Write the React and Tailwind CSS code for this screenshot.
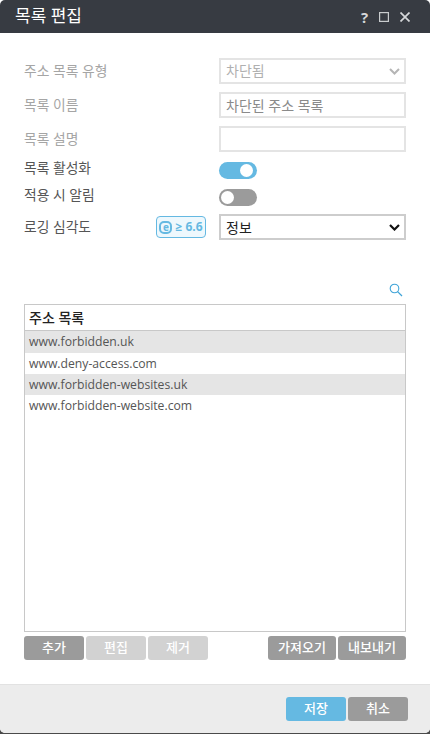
import React from "react";

const labelCls = "w-[195px] shrink-0 text-[13.8px]";
const toggleLabelCls = "w-[195px] shrink-0 pb-[4px] text-[13.8px]";

function Toggle({ on }) {
  return (
    <div className={`relative h-[17px] w-[38px] rounded-full ${on ? "bg-[#65b9e2]" : "bg-[#9b9b9b]"}`}>
      <div className={`absolute top-[2px] h-[13px] w-[13px] rounded-full bg-white ${on ? "left-[21px]" : "left-[2px]"}`} />
    </div>
  );
}

function Btn({ children, w, color = "bg-[#9b9b9b]" }) {
  return (
    <div className={`flex h-[24px] items-center justify-center rounded-[3px] text-[13px] font-medium text-white ${w} ${color}`}>
      {children}
    </div>
  );
}

const urls = [
  ["www.forbidden.uk", "h-[22px] bg-[#e5e5e5]"],
  ["www.deny-access.com", "h-[21px] bg-white"],
  ["www.forbidden-websites.uk", "h-[21px] bg-[#e5e5e5]"],
  ["www.forbidden-website.com", "h-[21px] bg-white"],
];

export default function App() {
  return (
    <div className="flex h-[734px] w-[430px] flex-col overflow-hidden bg-[#4a4a4a] font-['Open_Sans','Noto_Sans_CJK_KR',sans-serif] text-[#555555]">
      <div className="flex h-[733px] flex-col overflow-hidden rounded-b-[5px] bg-white">
        <header className="flex h-[33px] shrink-0 items-center justify-between rounded-t-[5px] bg-[#373b42] pl-[15px] pr-[20px]">
          <span className="pb-[2px] text-[17px] font-normal leading-none text-white">목록 편집</span>
          <div className="flex items-center pt-[1px]">
            <span className="w-[7px] text-center text-[15px] font-bold leading-none text-[#d5d7d9]">?</span>
            <svg width="10" height="10" viewBox="0 0 10 10" className="ml-[11px]"><rect x="0.6" y="0.6" width="8.8" height="8.8" fill="none" stroke="#c9ccce" strokeWidth="1.2" /></svg>
            <svg width="10" height="10" viewBox="0 0 10 10" className="ml-[11px]"><path d="M0.5 0.5 L9.5 9.5 M9.5 0.5 L0.5 9.5" stroke="#d5d7d9" strokeWidth="1.7" /></svg>
          </div>
        </header>

        <main className="flex flex-1 flex-col px-[24px] pt-[25px]">
          <div className="flex h-[26px] items-center">
            <label className={`${labelCls} text-[#a5a5a5]`}>주소 목록 유형</label>
            <div className="flex h-[26px] flex-1 items-center justify-between border-2 border-[#e4e4e4] pl-[5px] pr-[4px] text-[14px] text-[#b0b0b0]">
              <span className="pb-[2px]">차단됨</span>
              <svg width="11" height="7" viewBox="0 0 11 7"><path d="M1 1 L5.5 5.5 L10 1" fill="none" stroke="#b5b5b5" strokeWidth="2" /></svg>
            </div>
          </div>
          <div className="mt-[8px] flex h-[26px] items-center">
            <label className={`${labelCls} text-[#a5a5a5]`}>목록 이름</label>
            <div className="flex h-[26px] flex-1 items-center border-2 border-[#e4e4e4] pl-[5px] text-[14px] text-[#8a8a8a]">차단된 주소 목록</div>
          </div>
          <div className="mt-[8px] flex h-[26px] items-center">
            <label className={`${labelCls} text-[#a5a5a5]`}>목록 설명</label>
            <div className="h-[26px] flex-1 border-2 border-[#e4e4e4]" />
          </div>
          <div className="mt-[10px] flex h-[17px] items-center">
            <label className={toggleLabelCls}>목록 활성화</label>
            <Toggle on />
          </div>
          <div className="mt-[10px] flex h-[17px] items-center">
            <label className={toggleLabelCls}>적용 시 알림</label>
            <Toggle />
          </div>
          <div className="mt-[8px] flex h-[26px] items-center">
            <label className="w-[132px] shrink-0 text-[13.8px]">로깅 심각도</label>
            <div className="mr-[13px] flex h-[22px] w-[50px] items-center justify-center gap-[3px] rounded-[4px] border border-[#65b9e2] bg-[#eef8fd] text-[12px] font-bold text-[#65b9e2]">
              <span className="flex h-[13px] w-[13px] shrink-0 items-center justify-center rounded-[5px] border-2 border-[#65b9e2] pb-[1px] text-[10px] leading-none">e</span>
              <span className="whitespace-nowrap">≥ 6.6</span>
            </div>
            <div className="flex h-[26px] flex-1 items-center justify-between border-2 border-[#cdcdcd] pl-[5px] pr-[4px] text-[14px] text-[#222]">
              <span>정보</span>
              <svg width="11" height="7" viewBox="0 0 11 7"><path d="M1 1 L5.5 5.5 L10 1" fill="none" stroke="#111" strokeWidth="2.2" /></svg>
            </div>
          </div>

          <div className="mt-[43px] flex h-[21px] items-start justify-end pr-[3px]">
            <svg width="14" height="14" viewBox="0 0 14 14"><circle cx="5.5" cy="5.5" r="4.3" fill="none" stroke="#3fa4d8" strokeWidth="1.1" /><path d="M8.6 8.6 L13 13" stroke="#3fa4d8" strokeWidth="1.3" /></svg>
          </div>

          <div className="h-[328px] border border-[#c8c8c8]">
            <div className="flex h-[26px] items-center border-b border-[#c8c8c8] pl-[4px] text-[14px] font-medium text-[#222]">주소 목록</div>
            {urls.map(([u, cls]) => (
              <div key={u} className={`flex items-center pl-[4px] pt-[1px] text-[12.2px] ${cls}`}>{u}</div>
            ))}
          </div>

          <div className="mt-[4px] flex items-center gap-[2px]">
            <Btn w="w-[60px]">추가</Btn>
            <Btn w="w-[60px]" color="bg-[#d2d2d2]">편집</Btn>
            <Btn w="w-[60px]" color="bg-[#d2d2d2]">제거</Btn>
            <div className="flex-1" />
            <Btn w="w-[68px]">가져오기</Btn>
            <Btn w="w-[68px]">내보내기</Btn>
          </div>
        </main>

        <footer className="flex h-[49px] shrink-0 items-start justify-end gap-[2px] border-t border-[#e2e2e2] bg-[#ececec] pr-[22px] pt-[12px]">
          <Btn w="w-[60px]" color="bg-[#65b9e2]">저장</Btn>
          <Btn w="w-[60px]">취소</Btn>
        </footer>
      </div>
    </div>
  );
}
